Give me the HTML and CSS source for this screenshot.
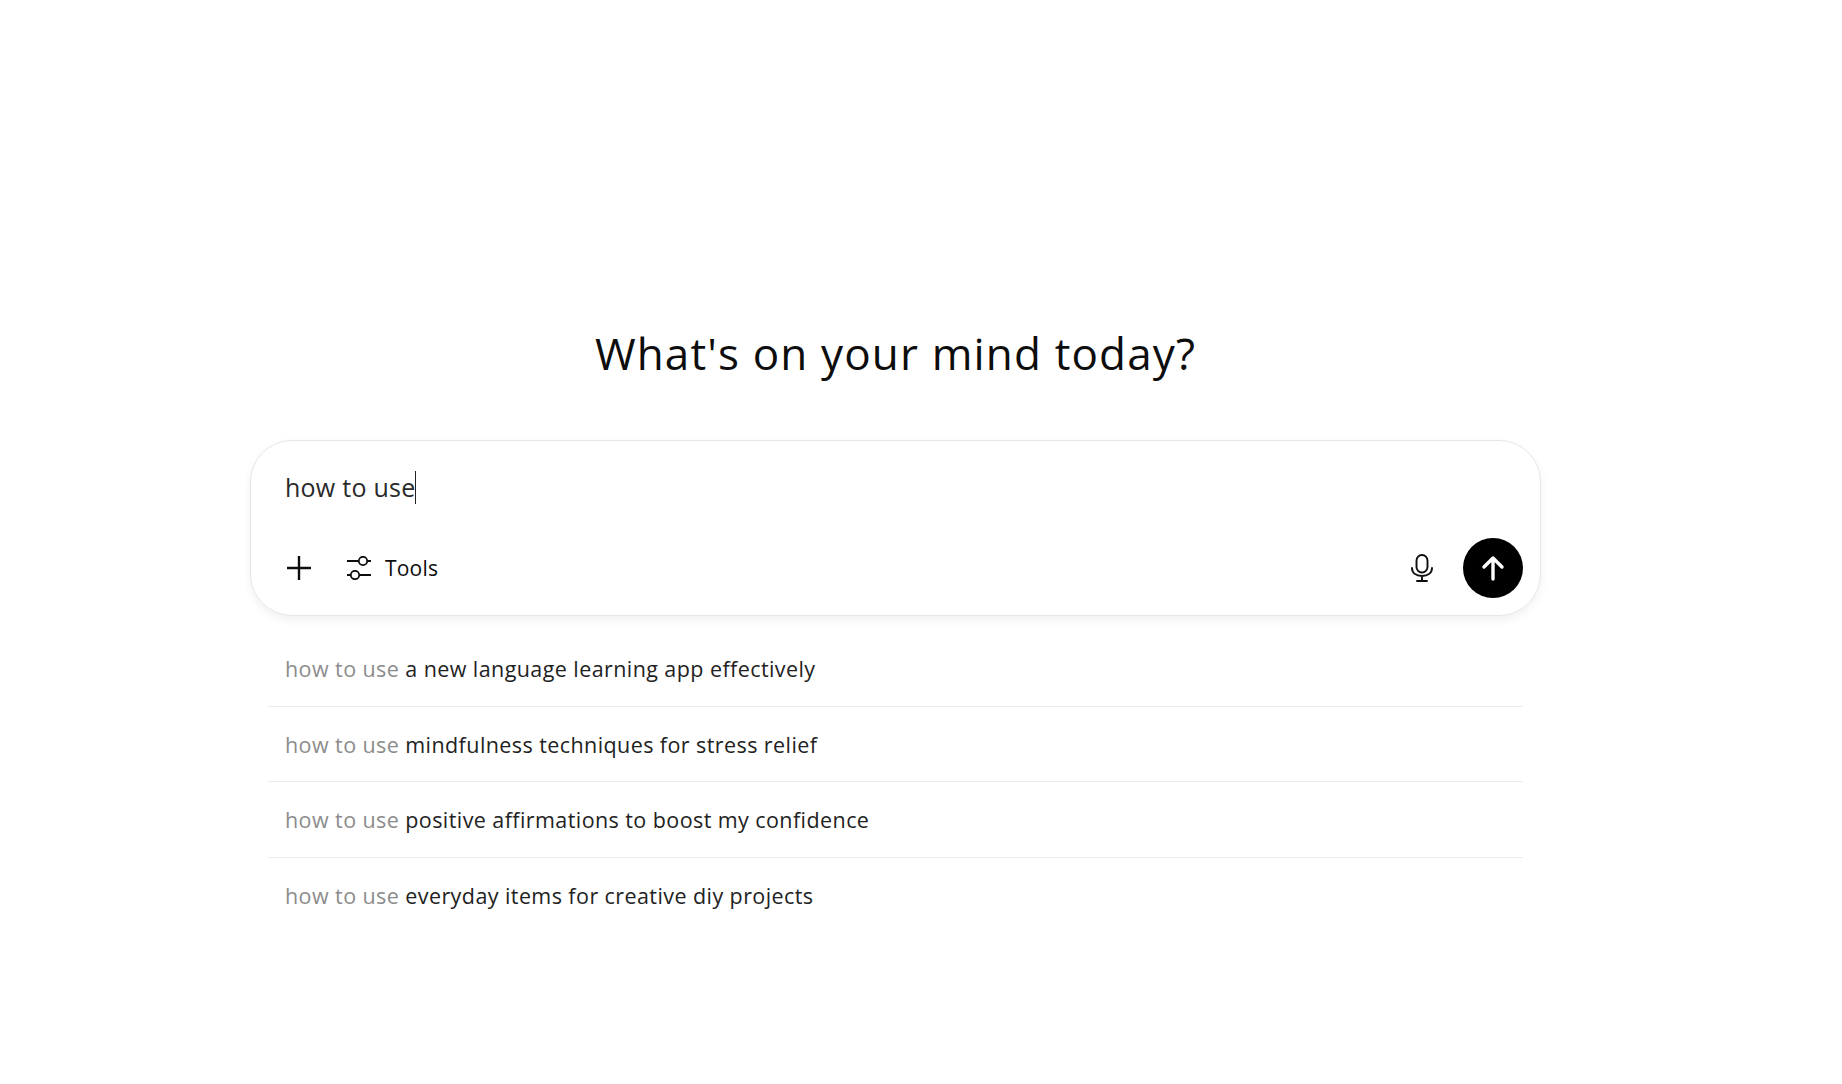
FILE: index.html
```html
<!DOCTYPE html>
<html lang="en">
<head>
  <meta charset="UTF-8">
  <title>What's on your mind today?</title>
  <link rel="stylesheet" href="styles.css">
</head>
<body>
  <main class="page">
    <h1 class="title">What's on your mind today?</h1>

    <div class="composer">
      <div class="prompt"><span>how to use</span><span class="caret"></span></div>
      <div class="toolbar">
        <button class="icon-button plus" aria-label="Add">
          <svg width="24" height="24" viewBox="0 0 24 24" fill="none" stroke="#0d0d0d" stroke-width="2.4"><path d="M12 0v24M0 12h24"/></svg>
        </button>
        <button class="tools">
          <svg width="24" height="24" viewBox="0 0 24 24" fill="none" stroke="#0d0d0d" stroke-width="1.8"><path d="M0 5h11.500M20.500 5H24M0 19h3.500M12.500 19H24"/><circle cx="16" cy="5" r="4.200"/><circle cx="8" cy="19" r="4.200"/></svg>
          <span>Tools</span>
        </button>
        <button class="icon-button mic" aria-label="Voice">
          <svg width="22" height="28" viewBox="0 0 22 28" fill="none" stroke="#0d0d0d" stroke-width="1.900" stroke-linecap="round"><rect x="5.500" y="1" width="11" height="17.500" rx="5.500"/><path d="M1 14c0 5 4 8 10 8s10-3 10-8M11 22v4.500M6 27h10"/></svg>
        </button>
        <button class="send" aria-label="Send">
          <svg width="24" height="26" viewBox="0 0 24 26" fill="none" stroke="#fff" stroke-width="3.400" stroke-linecap="round" stroke-linejoin="round"><path d="M12 24V3M3 12l9-9 9 9"/></svg>
        </button>
      </div>
    </div>

    <ul class="suggestions">
      <li><span class="typed">how to use</span> a new language learning app effectively</li>
      <li><span class="typed">how to use</span> mindfulness techniques for stress relief</li>
      <li><span class="typed">how to use</span> positive affirmations to boost my confidence</li>
      <li><span class="typed">how to use</span> everyday items for creative diy projects</li>
    </ul>
  </main>
</body>
</html>
```

FILE: styles.css
```css
body {
  margin: 0;
  background-color: #fff;
  color: #0d0d0d;
  font-family: "Open Sans", "Noto Sans", sans-serif;
}

.page {
  width: 1291px;
  margin: 0 0 0 250px;
  padding-top: 321px;
}

.title {
  margin: 0 0 55px;
  height: 64px;
  line-height: 64px;
  text-align: center;
  font-size: 44px;
  font-weight: 400;
  letter-spacing: 1.150px;
}

.composer {
  box-sizing: border-box;
  height: 176px;
  border: 1px solid #e6e6e6;
  border-radius: 42px;
  padding: 28px 17px 17px 34px;
  box-shadow: 0 4px 10px rgba(0, 0, 0, 0.06);
}

.prompt {
  display: flex;
  align-items: center;
  height: 36px;
  font-size: 25px;
  letter-spacing: 0.25px;
  color: #2a2a2a;
}

.caret {
  width: 1px;
  height: 33px;
  background-color: #222;
}

.toolbar {
  display: flex;
  align-items: center;
  margin: 33px 0 0 2px;
  height: 60px;
}

button {
  display: flex;
  align-items: center;
  padding: 0;
  border: 0;
  background: none;
  font: inherit;
  color: inherit;
}

.plus {
  margin-right: 36px;
}

.tools {
  gap: 14px;
  font-size: 21px;
  letter-spacing: 0.2px;
}

.mic {
  margin-left: auto;
  margin-right: 30px;
}

.send {
  justify-content: center;
  width: 60px;
  height: 60px;
  border-radius: 50%;
  background-color: #000;
}

.suggestions {
  list-style: none;
  margin: 15px 18px 0;
  padding: 0;
  font-size: 21.500px;
  letter-spacing: 0.42px;
  color: #222;
}

.suggestions li {
  box-sizing: border-box;
  height: 75.500px;
  line-height: 75px;
  padding-left: 17px;
  border-bottom: 1px solid #ececec;
}

.suggestions li:last-child {
  border-bottom: 0;
}

.typed {
  color: #8c8c8c;
}
```
